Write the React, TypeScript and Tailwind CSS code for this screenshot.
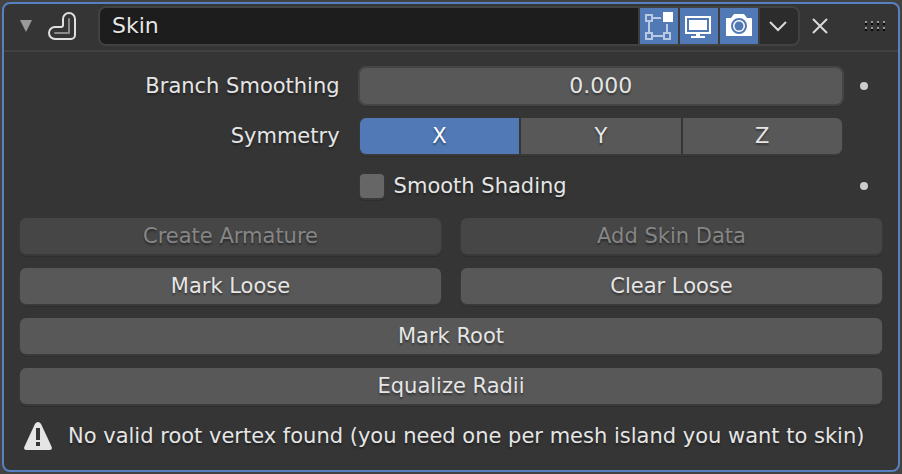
import { useState, type ReactNode } from 'react';

const raised = 'shadow-[0_1px_0_1px_#393939,0_2px_0_1px_#2e2e2e]';
const inkShadow = '[text-shadow:0_2px_2px_rgba(0,0,0,0.4)]';

function ActionButton({ children, disabled = false, wide = false }: { children: ReactNode; disabled?: boolean; wide?: boolean }) {
  return (
    <button
      type="button"
      disabled={disabled}
      className={`h-9 rounded-md ${raised} ${inkShadow} ${wide ? 'col-span-2' : ''} ${
        disabled ? 'bg-[#464646] text-[#868686]' : 'bg-[#585858] text-[#e5e5e5]'
      }`}
    >
      {children}
    </button>
  );
}

function HeaderToggle({ label, children }: { label: string; children: ReactNode }) {
  const [on, setOn] = useState(true);
  return (
    <button
      type="button"
      aria-label={label}
      aria-pressed={on}
      onClick={() => setOn(!on)}
      className={`flex w-[38px] shrink-0 items-center justify-center ${on ? 'bg-[#5179b5]' : 'bg-[#2c2c2c]'}`}
    >
      {children}
    </button>
  );
}

function AnimateDot({ label }: { label: string }) {
  return (
    <button type="button" aria-label={label} className="flex h-9 items-center">
      <span className="size-2 rounded-full bg-[#cccccc]" />
    </button>
  );
}

export default function App() {
  const [name, setName] = useState('Skin');
  const [smoothing, setSmoothing] = useState('0.000');
  const [smooth, setSmooth] = useState(false);
  const [axes, setAxes] = useState<Record<string, boolean>>({ X: true, Y: false, Z: false });

  return (
    <div className="min-h-screen bg-[#424242] p-0.5 font-['DejaVu_Sans',sans-serif] text-[21px] leading-7 text-[#e5e5e5]">
      <section className="rounded-lg border-2 border-[#5680c2] bg-[#353535]">
        <header className="flex items-center border-b-2 border-[#424242] pt-0.5 pr-[13px] pb-1 pl-4">
          <button type="button" aria-label="Collapse panel" className="shrink-0">
            <svg width="12" height="12" viewBox="0 0 12 12" className="block">
              <path d="M0 0H12L6 12Z" fill="#999999" />
            </svg>
          </button>
          <svg width="28" height="28" viewBox="0 0 28 28" className="ml-4 shrink-0" fill="none" strokeLinejoin="round" strokeLinecap="round">
            <path d="M15 7A6 6 0 0 1 27 7V23A4 4 0 0 1 23 27H7A6 6 0 0 1 7 15H13A2 2 0 0 0 15 13Z" stroke="#e0e0e0" strokeWidth="2" />
            <path d="M21 7V21H7" stroke="#8b8b8b" strokeWidth="2" />
          </svg>
          <div className="ml-[22px] flex h-10 min-w-0 flex-1 gap-0.5 overflow-hidden rounded-lg border-2 border-[#424242] bg-[#3d3d3d]">
            <input
              aria-label="Modifier name"
              value={name}
              onChange={(e) => setName(e.target.value)}
              className={`min-w-0 flex-1 bg-[#1d1d1d] pl-3 text-[22px] outline-none ${inkShadow}`}
            />
            <HeaderToggle label="Edit mode">
              <svg width="28" height="28" viewBox="0 0 28 28" fill="none">
                <path d="M4 10V20M8 6H16M8 24H18M22 12V20" stroke="#b9c9e1" strokeWidth="2" />
                <path d="M1 3H7V9H1ZM1 21H7V27H1ZM19 21H25V27H19Z" stroke="#b9c9e1" strokeWidth="2" />
                <path d="M18 0H28V10H18Z" fill="#fff" />
              </svg>
            </HeaderToggle>
            <HeaderToggle label="Realtime">
              <svg width="28" height="28" viewBox="0 0 28 28" fill="none">
                <rect x="1" y="5" width="24" height="16" stroke="#fff" strokeWidth="2" />
                <path d="M4 8H22V18H4ZM11 22H15V24H20V26H6V24H11Z" fill="#fff" />
              </svg>
            </HeaderToggle>
            <HeaderToggle label="Render">
              <svg width="28" height="28" viewBox="0 0 28 28" fill="none">
                <path d="M1 6H6L9 2H19L22 6H26Q27 6 27 7V24H1Z" fill="#fff" />
                <circle cx="14" cy="14" r="7" stroke="#5179b5" strokeWidth="2" />
                <circle cx="14" cy="14" r="4.5" fill="#5179b5" />
              </svg>
            </HeaderToggle>
            <button type="button" aria-label="Modifier options" className="flex w-[38px] shrink-0 items-center justify-center bg-[#2c2c2c]">
              <svg width="20" height="12" viewBox="0 0 20 12" fill="none">
                <path d="M1 2L9 10L17 2" stroke="#d9d9d9" strokeWidth="2" />
              </svg>
            </button>
          </div>
          <button type="button" aria-label="Remove modifier" className="ml-3 shrink-0">
            <svg width="16" height="16" viewBox="0 0 16 16" fill="none" className="block">
              <path d="M1 1L15 15M15 1L1 15" stroke="#d9d9d9" strokeWidth="2" />
            </svg>
          </button>
          <svg width="20" height="12" viewBox="0 0 20 12" className="ml-[37px] shrink-0">
            {[0, 6, 12, 18].map((x) =>
              [1, 7].map((y) => (
                <g key={`${x}-${y}`}>
                  <rect x={x} y={y} width="2" height="2" fill="#999999" />
                  <rect x={x} y={y + 2} width="2" height="2" fill="#080808" />
                </g>
              )),
            )}
          </svg>
        </header>

        <div className="flex flex-col gap-3.5 p-4">
          <div className="grid grid-cols-[2fr_3fr_22px] items-center gap-x-[18px] gap-y-3.5">
            <label htmlFor="smoothing" className={`pr-0.5 text-right ${inkShadow}`}>
              Branch Smoothing
            </label>
            <input
              id="smoothing"
              value={smoothing}
              onChange={(e) => setSmoothing(e.target.value)}
              className={`h-9 w-full min-w-0 rounded-md bg-[#585858] pb-0.5 text-center text-[22px] shadow-[0_0_0_2px_#454545,0_2px_0_1px_#2e2e2e] outline-none ${inkShadow}`}
            />
            <AnimateDot label="Animate branch smoothing" />

            <span id="symmetry" className={`pr-0.5 text-right ${inkShadow}`}>
              Symmetry
            </span>
            <div role="group" aria-labelledby="symmetry" className={`flex h-9 gap-0.5 overflow-hidden rounded-md bg-[#353535] ${raised}`}>
              {Object.keys(axes).map((axis) => (
                <button
                  key={axis}
                  type="button"
                  aria-pressed={axes[axis]}
                  onClick={() => setAxes({ ...axes, [axis]: !axes[axis] })}
                  className={`flex-1 ${inkShadow} ${axes[axis] ? 'bg-[#5179b5] text-white' : 'bg-[#585858]'}`}
                >
                  {axis}
                </button>
              ))}
            </div>

            <label className={`col-start-2 flex h-9 items-center gap-2.5 ${inkShadow}`}>
              <input
                type="checkbox"
                checked={smooth}
                onChange={(e) => setSmooth(e.target.checked)}
                className={`size-6 shrink-0 appearance-none rounded bg-[#666666] checked:bg-[#5179b5] ${raised}`}
              />
              Smooth Shading
            </label>
            <AnimateDot label="Animate smooth shading" />
          </div>

          <div className="grid grid-cols-2 gap-x-5 gap-y-3.5">
            <ActionButton disabled>Create Armature</ActionButton>
            <ActionButton disabled>Add Skin Data</ActionButton>
            <ActionButton>Mark Loose</ActionButton>
            <ActionButton>Clear Loose</ActionButton>
            <ActionButton wide>Mark Root</ActionButton>
            <ActionButton wide>Equalize Radii</ActionButton>
          </div>

          <p role="alert" className={`flex min-h-9 items-center gap-4 pl-1 ${inkShadow}`}>
            <svg width="28" height="28" viewBox="0 0 28 28" className="shrink-0">
              <path d="M14 0C15.500 0 16.500 1 17.200 2.300L27.500 24.500C28.500 26.500 27.500 28 26 28H2C.5 28 -.5 26.500 .5 24.500L10.800 2.300C11.500 1 12.500 0 14 0Z" fill="#e5e5e5" />
              <path d="M12 6H16V18H12ZM12 20H16V24H12Z" fill="#353535" />
            </svg>
            No valid root vertex found (you need one per mesh island you want to skin)
          </p>
        </div>
      </section>
    </div>
  );
}
